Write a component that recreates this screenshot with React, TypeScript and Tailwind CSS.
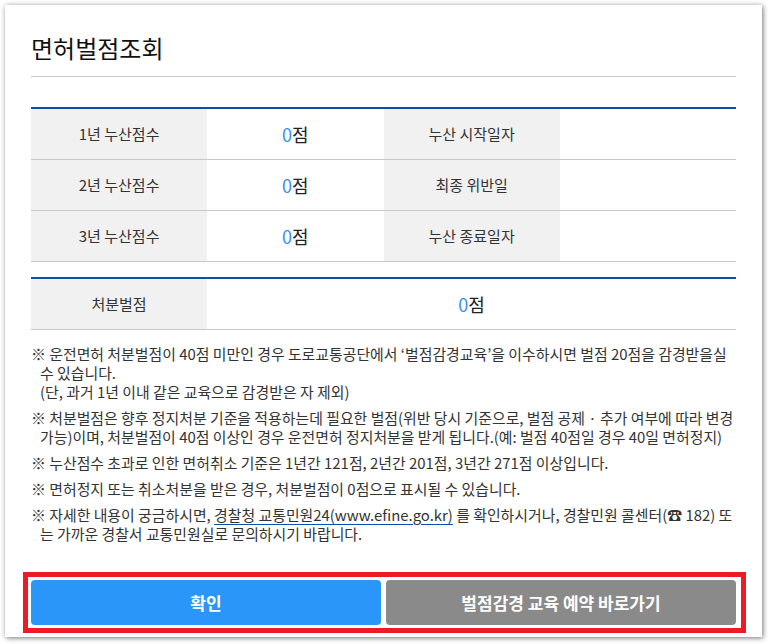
const FONT = { fontFamily: '"Noto Sans CJK KR", "Noto Sans", sans-serif' };

const ROWS = [
  { label: '1년 누산점수', side: '누산 시작일자' },
  { label: '2년 누산점수', side: '최종 위반일' },
  { label: '3년 누산점수', side: '누산 종료일자' },
];

function Score() {
  return (
    <span className="text-[18px]">
      <span className="text-[#3b8ff0]">0</span>
      <span className="text-[#222]">점</span>
    </span>
  );
}

export default function App() {
  return (
    <div className="w-[768px] h-[644px] bg-white pt-[5px] pl-[5px]" style={FONT}>
      <div className="w-[757px] h-[632px] bg-white shadow-[1px_1px_5px_rgba(0,0,0,0.55)] px-[26px] text-[#333]">
        <div className="pt-[26px] pb-[11px] border-b border-[#c8c8c8]">
          <h1 className="text-[24px] leading-[34px] text-[#111] font-normal">면허벌점조회</h1>
        </div>

        <div className="mt-[30px] border-t-2 border-[#0b4fad]">
          {ROWS.map(r => (
            <div key={r.label} className="grid grid-cols-4 h-[51px] border-b border-[#c8c8c8] text-[15px]">
              <div className="bg-[#f1f1f1] flex items-center justify-center">{r.label}</div>
              <div className="flex items-center justify-center">
                <Score />
              </div>
              <div className="bg-[#f1f1f1] flex items-center justify-center">{r.side}</div>
              <div />
            </div>
          ))}
        </div>

        <div className="mt-[15px] border-t-2 border-[#0b4fad]">
          <div className="grid grid-cols-[176px_1fr] h-[51px] border-b border-[#c8c8c8] text-[15px]">
            <div className="bg-[#f1f1f1] flex items-center justify-center">처분벌점</div>
            <div className="flex items-center justify-center">
              <Score />
            </div>
          </div>
        </div>

        <div className="mt-[14px] text-[14.9px] leading-[19px] text-[#333] space-y-[7px]">
          <p className="pl-[9px] -indent-[9px]">
            ※ 운전면허 처분벌점이 40점 미만인 경우 도로교통공단에서 ‘벌점감경교육’을 이수하시면 벌점 20점을 감경받을실 수 있습니다.
            <br />
            (단, 과거 1년 이내 같은 교육으로 감경받은 자 제외)
          </p>
          <p className="pl-[9px] -indent-[9px]">
            ※ 처분벌점은 향후 정지처분 기준을 적용하는데 필요한 벌점(위반 당시 기준으로, 벌점 공제 · 추가 여부에 따라 변경 가능)이며, 처분벌점이 40점 이상인 경우 운전면허 정지처분을 받게 됩니다.(예: 벌점 40점일 경우 40일 면허정지)
          </p>
          <p className="pl-[9px] -indent-[9px]">
            ※ 누산점수 초과로 인한 면허취소 기준은 1년간 121점, 2년간 201점, 3년간 271점 이상입니다.
          </p>
          <p className="pl-[9px] -indent-[9px]">
            ※ 면허정지 또는 취소처분을 받은 경우, 처분벌점이 0점으로 표시될 수 있습니다.
          </p>
          <p className="pl-[9px] -indent-[9px]">
            ※ 자세한 내용이 궁금하시면,{' '}
            <a className="underline decoration-[#0b4fad] underline-offset-[3px]">경찰청 교통민원24(www.efine.go.kr)</a>{' '}
            를 확인하시거나, 경찰민원 콜센터(☎ 182) 또는 가까운 경찰서 교통민원실로 문의하시기 바랍니다.
          </p>
        </div>

        <div className="mt-[29px] -ml-[8px] -mr-[10px] border-[5px] border-[#ed1c24] pt-[3px] pb-[3px] pl-[3px] pr-[5px] flex gap-[5px]">
          <button className="flex-1 h-[45px] rounded-[4px] bg-[#2b96f9] text-white text-[17px] font-bold">확인</button>
          <button className="flex-1 h-[45px] rounded-[4px] bg-[#8a8a8a] text-white text-[17px] font-bold">
            벌점감경 교육 예약 바로가기
          </button>
        </div>
      </div>
    </div>
  );
}
